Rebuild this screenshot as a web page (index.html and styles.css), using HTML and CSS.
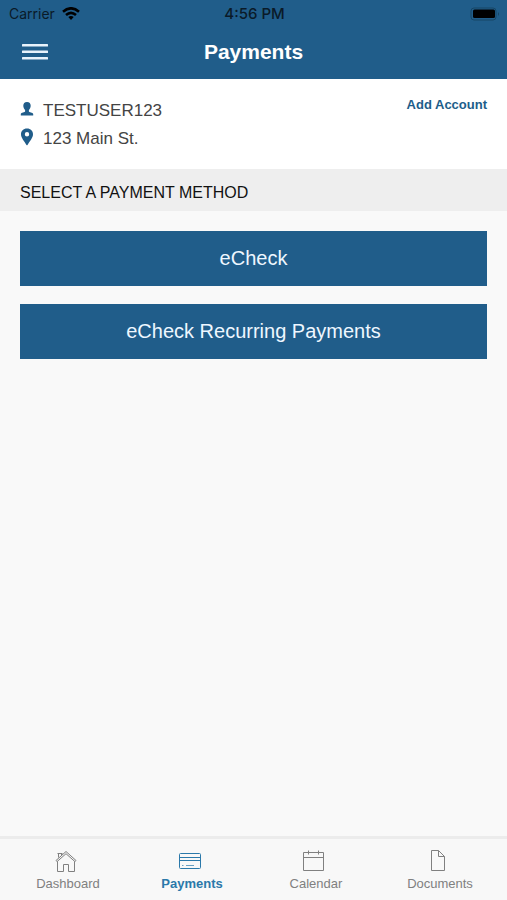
FILE: index.html
```html
<!DOCTYPE html>
<html lang="en">
<head>
<meta charset="utf-8">
<meta name="viewport" content="width=device-width, initial-scale=1">
<title>Payments</title>
<link rel="stylesheet" href="styles.css">
</head>
<body>
<header class="header">
  <div class="status">
    <div class="carrier">
      <span>Carrier</span>
      <svg width="18" height="14" viewBox="0 0 18 14" fill="none" stroke="#000" stroke-width="2.6" aria-hidden="true">
        <path d="M1 4.700Q9-2.100 17 4.700M4 8.100Q9 3.700 14 8.100"/>
        <path d="M6.300 10.100Q9 7.800 11.700 10.100L9 13.100Z" fill="#000" stroke="none"/>
      </svg>
    </div>
    <time class="clock">4:56 PM</time>
    <svg class="battery" width="30" height="14" viewBox="0 0 30 14" aria-hidden="true">
      <rect x="1" y="1" width="25" height="12" rx="3" fill="none" stroke="#164665"/>
      <rect x="3" y="2.500" width="22" height="8.500" rx="1.500"/>
      <path d="M28 5Q30 7 28 9Z" fill="#164665"/>
    </svg>
  </div>
  <div class="titlebar">
    <button class="menu" type="button" aria-label="Menu">
      <svg width="26" height="16" viewBox="0 0 26 16" fill="#e8f3fc" aria-hidden="true">
        <rect width="26" height="2.600" rx=".5"/><rect y="6.500" width="26" height="2.600" rx=".5"/><rect y="13" width="26" height="2.600" rx=".5"/>
      </svg>
    </button>
    <h1 class="title">Payments</h1>
  </div>
</header>
<main class="main">
  <section class="account">
    <div class="details">
      <div class="detail">
        <svg width="14" height="14" viewBox="0 0 14 14" fill="#205d8a" aria-hidden="true">
          <path d="M7 0C4.500 0 3.300 1.500 3.300 3.700C3.300 5.600 4.300 7.200 5.100 8V9.600C5.100 10.500 1 10.600 .8 12V13.500H13.200V12C13 10.600 8.900 10.500 8.900 9.600V8C9.700 7.200 10.700 5.600 10.700 3.700C10.700 1.500 9.500 0 7 0Z"/>
        </svg>
        <span>TESTUSER123</span>
      </div>
      <div class="detail">
        <svg width="14" height="18" viewBox="0 0 14 18" fill="#205d8a" aria-hidden="true">
          <path fill-rule="evenodd" d="M7 .5C3.300 .5 1 3 1 6.300C1 10 4.500 13.500 6.500 17Q7 17.600 7.500 17C9.500 13.500 13 10 13 6.300C13 3 10.700 .5 7 .5ZM7 4.100A2.200 2.200 0 1 1 7 8.500A2.200 2.200 0 1 1 7 4.100Z"/>
        </svg>
        <span>123 Main St.</span>
      </div>
    </div>
    <a class="add" href="#add">Add Account</a>
  </section>
  <h2 class="heading">SELECT A PAYMENT METHOD</h2>
  <div class="methods">
    <button class="method" type="button">eCheck</button>
    <button class="method" type="button">eCheck Recurring Payments</button>
  </div>
</main>
<nav class="tabs">
  <a class="tab" href="#dashboard">
    <svg class="icon" width="24" height="24" viewBox="0 0 24 24" aria-hidden="true">
      <path d="M2 11.500L12 2.500L22 11.500L21 12.700L12 4.700L3 12.700ZM3.500 12.500V22.500H9.500V15.500H14.500V22.500H20.500V12.500M4.500 8.500V4.500H7.500V6M3.500 4.500H8.500"/>
    </svg>
    <span>Dashboard</span>
  </a>
  <a class="tab active" href="#payments" aria-current="page">
    <svg class="icon" width="24" height="24" viewBox="0 0 24 24" aria-hidden="true">
      <rect x="1.500" y="4.500" width="21" height="15" rx="1"/><path d="M1.500 8.500H22.500M1.500 11.500H22.500"/><path d="M4 16.500H5.500M8 16.500H16" opacity=".7"/>
    </svg>
    <span>Payments</span>
  </a>
  <a class="tab" href="#calendar">
    <svg class="icon" width="24" height="24" viewBox="0 0 24 24" aria-hidden="true">
      <path d="M1.500 3.500H21.500V21.500H1.500ZM1.500 8.500H21.500M6.500 1.500V5.500M16.500 1.500V5.500"/>
    </svg>
    <span>Calendar</span>
  </a>
  <a class="tab" href="#documents">
    <svg class="icon" width="24" height="24" viewBox="0 0 24 24" aria-hidden="true">
      <path d="M5.500 1.500H12.500L18.500 7.500V21.500H5.500ZM12.500 1.500V7.500H18.500"/>
    </svg>
    <span>Documents</span>
  </a>
</nav>
</body>
</html>
```
FILE: styles.css
```css
* { box-sizing: border-box; }
body {
  margin: 0;
  min-height: 100vh;
  display: flex;
  flex-direction: column;
  background: #f9f9f9;
  color: #444;
  font-family: "Liberation Sans", Arial, sans-serif;
}
h1, h2 { margin: 0; }
a { text-decoration: none; }
svg { display: block; flex: none; }
button { border: 0; padding: 0; font: inherit; cursor: pointer; }

.header { background: #205d8a; padding-bottom: 2px; }
.status {
  display: grid;
  grid-template-columns: 1fr auto 1fr;
  align-items: center;
  height: 27px;
  padding: 0 7px 0 9px;
  color: #0a1a28;
  font-family: Inter, sans-serif;
  font-size: 14px;
}
.carrier { display: flex; align-items: center; gap: 7px; }
.clock { font-size: 15px; font-weight: 500; }
.battery { justify-self: end; }
.titlebar {
  display: grid;
  grid-template-columns: 1fr auto 1fr;
  align-items: center;
  height: 50px;
  padding: 0 20px;
}
.menu { justify-self: start; padding: 8px 2px; background: none; }
.title { color: #fff; font-size: 21px; line-height: 24px; }

.main { flex: 1; }
.account {
  display: flex;
  justify-content: space-between;
  align-items: flex-start;
  padding: 16px 20px;
  background: #fff;
}
.details { display: flex; flex-direction: column; padding-top: 2px; }
.detail {
  display: flex;
  align-items: center;
  gap: 9px;
  font-size: 17px;
  line-height: 28px;
}
.detail svg { margin-bottom: 5px; }
.add { color: #205d8a; font-size: 13px; font-weight: 700; line-height: 20px; }
.heading {
  padding: 14px 20px 8px;
  background: #eee;
  color: #111;
  font-size: 16px;
  font-weight: 400;
  line-height: 20px;
}
.methods { display: flex; flex-direction: column; gap: 18px; padding: 20px; }
.method {
  height: 55px;
  background: #205d8a;
  color: #eef7ff;
  font-size: 20px;
}

.tabs {
  display: grid;
  grid-template-columns: repeat(4, 1fr);
  padding: 10px 5px 7px 6px;
  border-top: 3px solid #ececec;
  background: #f8f8f8;
}
.tab {
  display: flex;
  flex-direction: column;
  align-items: center;
  gap: 2px;
  color: #808080;
  font-size: 13px;
  line-height: 18px;
}
.active { color: #2b79aa; font-weight: 700; }
.icon { margin-right: 4px; fill: none; stroke: currentColor; stroke-width: 1; }
```
